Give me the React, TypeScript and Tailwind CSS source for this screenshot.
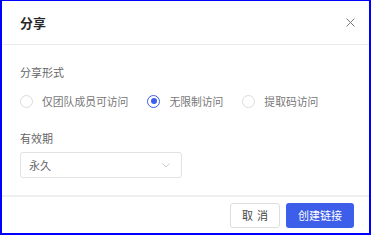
import { useState } from "react";

const options = ["仅团队成员可访问", "无限制访问", "提取码访问"];

export default function App() {
  const [selected, setSelected] = useState(1);

  return (
    <div
      className="w-[371px] h-[235px] bg-white border-2 border-t border-[#0000ff] flex flex-col"
      style={{ fontFamily: '"Noto Sans CJK SC", "Noto Sans", sans-serif' }}
    >
      {/* header */}
      <div className="h-[44px] shrink-0 flex items-center justify-between pl-[18px] pr-[14px] border-b border-[#ebebeb]">
        <span className="text-[13px] font-semibold text-[#2a2a2a]">分享</span>
        <button type="button" className="w-[9px] h-[9px] flex items-center justify-center">
          <svg width="9" height="9" viewBox="0 0 9 9" fill="none">
            <path d="M0.5 0.5L8.5 8.5M8.5 0.5L0.5 8.5" stroke="#777" strokeWidth="1" />
          </svg>
        </button>
      </div>

      {/* body */}
      <div className="flex-1 pl-[18px] pr-[14px] pt-[19px]">
        <div className="text-[11px] leading-[16px] text-[#666]">分享形式</div>
        <div className="mt-[13px] flex items-center h-[16px]">
          {options.map((label, i) => (
            <label
              key={label}
              className="flex items-center gap-[9px] mr-[19px] cursor-pointer"
              onClick={() => setSelected(i)}
            >
              {selected === i ? (
                <span className="w-[13px] h-[13px] rounded-full border border-[#3c5ee8] flex items-center justify-center">
                  <span className="w-[6px] h-[6px] rounded-full bg-[#3c5ee8]" />
                </span>
              ) : (
                <span className="w-[13px] h-[13px] rounded-full border border-[#dcdcdc]" />
              )}
              <span className="text-[10.8px] leading-[16px] text-[#777]">{label}</span>
            </label>
          ))}
        </div>

        <div className="mt-[21px] text-[11px] leading-[16px] text-[#666]">有效期</div>
        <div className="mt-[6px] w-[162px] h-[26px] rounded-[3px] border border-[#e2e2e2] flex items-center justify-between pl-[8px] pr-[11px]">
          <span className="text-[11px] text-[#666]">永久</span>
          <svg width="8" height="5" viewBox="0 0 8 5" fill="none">
            <path d="M0.5 0.5L4 4L7.5 0.5" stroke="#c4c4c4" strokeWidth="0.9" />
          </svg>
        </div>
      </div>

      {/* footer */}
      <div className="h-[38px] shrink-0 border-t-2 border-[#efefef] flex items-center justify-end gap-[6px] pr-[15px]">
        <button
          type="button"
          className="w-[50px] h-[25px] rounded-[3px] border border-[#dedede] text-[11px] text-[#444] bg-white flex items-center justify-center gap-[4px]"
        >
          <span>取</span>
          <span>消</span>
        </button>
        <button
          type="button"
          className="w-[68px] h-[25px] rounded-[3px] bg-[#3c5ee8] text-[11px] text-white"
        >
          创建链接
        </button>
      </div>
    </div>
  );
}
